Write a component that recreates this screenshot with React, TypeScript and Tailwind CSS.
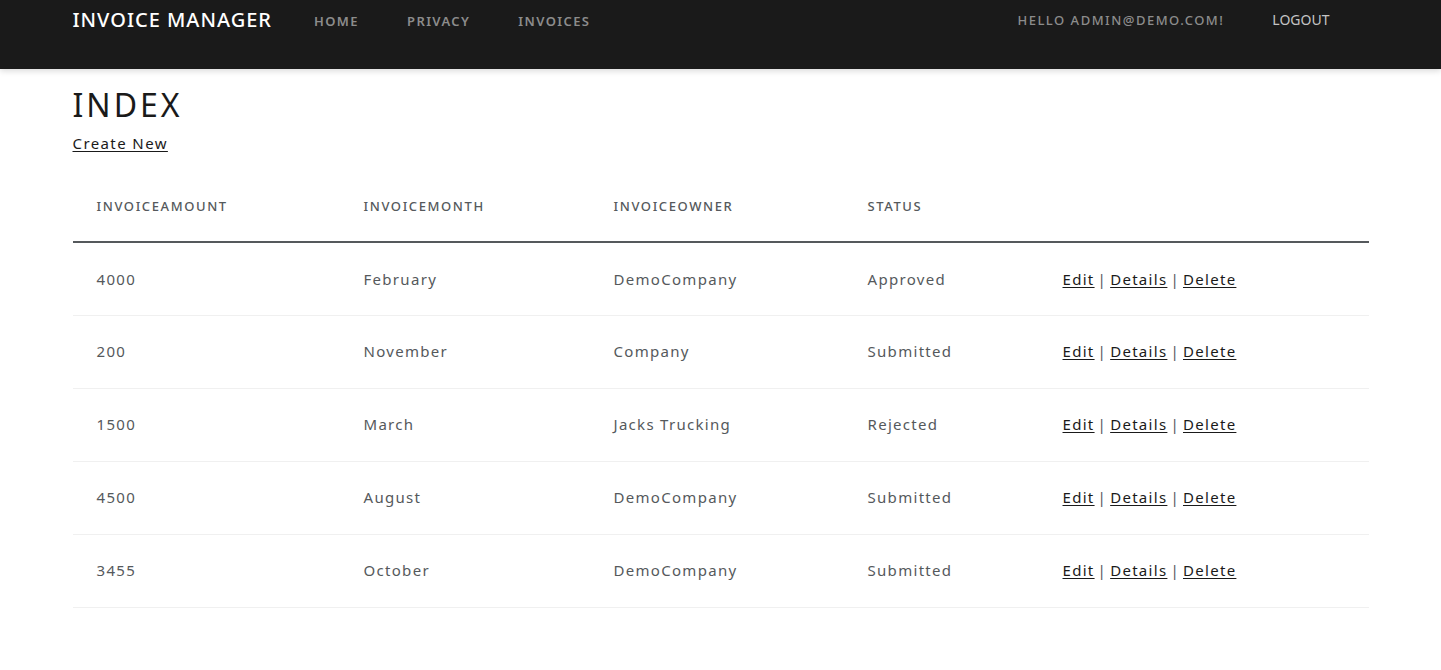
import React from 'react';

const invoices = [
  { amount: '4000', month: 'February', owner: 'DemoCompany', status: 'Approved' },
  { amount: '200', month: 'November', owner: 'Company', status: 'Submitted' },
  { amount: '1500', month: 'March', owner: 'Jacks Trucking', status: 'Rejected' },
  { amount: '4500', month: 'August', owner: 'DemoCompany', status: 'Submitted' },
  { amount: '3455', month: 'October', owner: 'DemoCompany', status: 'Submitted' },
];

const font = { fontFamily: '"Noto Sans", "Open Sans", sans-serif' };

export default function App() {
  return (
    <div className="min-h-screen bg-white" style={font}>
      {/* Navbar */}
      <nav className="h-[69px] bg-[#1a1a1a] shadow-[0_2px_6px_rgba(0,0,0,0.15)]">
        <div className="mx-auto flex w-[1320px] items-start px-3 pt-[7px]">
          <a className="mr-[18px] text-[20px] font-medium leading-[26px] tracking-[1px] text-white">
            INVOICE MANAGER
          </a>
          <ul className="flex pt-[3px]">
            {['HOME', 'PRIVACY', 'INVOICES'].map((l) => (
              <li key={l} className="px-6 text-[13px] font-semibold leading-[22px] tracking-[1.4px] text-[#8c8c8c]">
                {l}
              </li>
            ))}
          </ul>
          <div className="ml-auto flex pt-[3px]">
            <span className="mr-[48px] text-[13px] font-medium leading-[20px] tracking-[1.5px] text-[#8c8c8c]">
              HELLO ADMIN@DEMO.COM!
            </span>
            <span className="mr-[39px] text-[14px] leading-[20px] text-[#c4c4c4]">LOGOUT</span>
          </div>
        </div>
      </nav>

      {/* Content */}
      <main className="mx-auto w-[1320px] px-3">
        <h1 className="mt-[17px] text-[32px] font-normal leading-[38px] tracking-[3px] text-[#1a1a1a]">INDEX</h1>
        <p className="mt-[7px]">
          <a className="text-[15px] leading-[22px] tracking-[1.4px] text-[#1a1a1a] underline underline-offset-2">
            Create New
          </a>
        </p>

        <table className="mt-[15px] w-full border-collapse text-left">
          <thead>
            <tr className="border-b-2 border-[#55595c]">
              {['InvoiceAmount', 'InvoiceMonth', 'InvoiceOwner', 'Status'].map((h, i) => (
                <th
                  key={h}
                  className={`h-[72px] px-6 pt-[2px] align-middle text-[13px] font-medium uppercase tracking-[1.6px] text-[#55595c] ${
                    ['w-[267px]', 'w-[250px]', 'w-[254px]', 'w-[195px]'][i]
                  }`}
                >
                  {h}
                </th>
              ))}
              <th className="px-6" />
            </tr>
          </thead>
          <tbody>
            {invoices.map((r) => (
              <tr key={r.amount} className="border-b border-[#f0f0f0]">
                <td className="h-[73px] px-6 text-[15px] tracking-[1.3px] text-[#55595c]">{r.amount}</td>
                <td className="px-6 text-[15px] tracking-[1.3px] text-[#55595c]">{r.month}</td>
                <td className="px-6 text-[15px] tracking-[1.3px] text-[#55595c]">{r.owner}</td>
                <td className="px-6 text-[15px] tracking-[1.3px] text-[#55595c]">{r.status}</td>
                <td className="px-6 text-[15px] tracking-[1.3px] text-[#55595c]">
                  <a className="text-[#1a1a1a] underline underline-offset-2">Edit</a>
                  <span className="mx-[3px]">|</span>
                  <a className="text-[#1a1a1a] underline underline-offset-2">Details</a>
                  <span className="mx-[3px]">|</span>
                  <a className="text-[#1a1a1a] underline underline-offset-2">Delete</a>
                </td>
              </tr>
            ))}
          </tbody>
        </table>
      </main>
    </div>
  );
}
